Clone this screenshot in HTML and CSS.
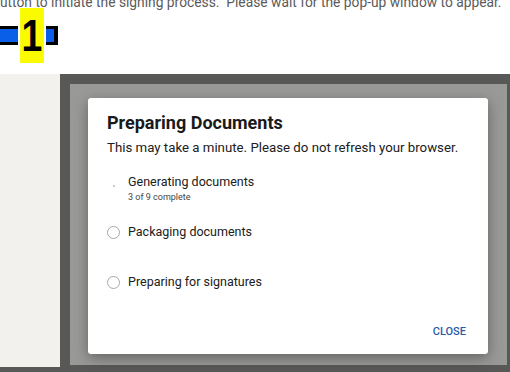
FILE: index.html
```html
<!DOCTYPE html>
<html>
<head>
	<meta charset="UTF-8">
	<link rel="stylesheet" href="styles.css">
</head>
<body>
	<p class="intro">utton to initiate the signing process.&nbsp; Please wait for the pop-up window to appear.</p>

	<div class="marker">
		<div class="marker-bar marker-left"></div>
		<div class="marker-num">1</div>
		<div class="marker-bar marker-right"></div>
	</div>

	<div class="stage">
		<div class="side"></div>
		<div class="frame">
			<div class="backdrop">
				<div class="dialog">
					<h2 class="dialog-title">Preparing Documents</h2>
					<p class="dialog-text">This may take a minute. Please do not refresh your browser.</p>

					<ul class="steps">
						<li class="step">
							<span class="step-icon"><span class="spinner"></span></span>
							<div>
								<div class="step-label">Generating documents</div>
								<div class="step-sub">3 of 9 complete</div>
							</div>
						</li>
						<li class="step">
							<span class="step-icon"><span class="radio"></span></span>
							<div class="step-label">Packaging documents</div>
						</li>
						<li class="step">
							<span class="step-icon"><span class="radio"></span></span>
							<div class="step-label">Preparing for signatures</div>
						</li>
					</ul>

					<div class="dialog-actions">
						<button class="btn-close">CLOSE</button>
					</div>
				</div>
			</div>
		</div>
	</div>
</body>
</html>
```

FILE: styles.css
```css
body {
	margin: 0;
	background: white;
	font-family: Roboto, "Liberation Sans", sans-serif;
	overflow: hidden;
}

.intro {
	margin: -6px 0 0;
	font-size: 13.8px;
	line-height: 16px;
	color: #5a5a5a;
	white-space: nowrap;
}

.marker {
	display: flex;
	align-items: center;
	height: 55px;
	margin-top: -2px;
}

.marker-bar {
	height: 13px;
	background: #0a5fe8;
	border-top: 3px solid black;
	border-bottom: 3px solid black;
}
.marker-left {
	width: 18px;
}
.marker-right {
	width: 8px;
	border-right: 4px solid black;
}

.marker-num {
	width: 28px;
	height: 55px;
	background: #fbfb00;
	color: black;
	font-family: "Liberation Sans", Arial, sans-serif;
	font-weight: bold;
	font-size: 44px;
	line-height: 55px;
	text-align: center;
	transform: scaleX(0.85);
}

.stage {
	display: flex;
	margin-top: 11px;
	height: 298px;
	background: #585856;
}

.side {
	width: 60px;
	height: 293px;
	background: #f3f1ee;
}

.frame {
	flex: 1;
	padding: 10px 3px 7px 10px;
}

.backdrop {
	height: 281px;
	background: #999997;
	padding-top: 14px;
	box-sizing: border-box;
}

.dialog {
	display: flex;
	flex-direction: column;
	width: 400px;
	height: 256px;
	margin-left: 18px;
	box-sizing: border-box;
	padding: 15px 22px 14px 19px;
	background: white;
	border-radius: 3px;
	box-shadow: 0 4px 14px rgba(0, 0, 0, 0.35);
	color: #202020;
}

.dialog-title {
	margin: 0;
	font-size: 18px;
	line-height: 20px;
	font-weight: 700;
	color: #1a1a1a;
}

.dialog-text {
	margin: 7px 0 0;
	font-size: 13.25px;
	line-height: 16px;
}

.steps {
	list-style: none;
	margin: 18px 0 0;
	padding: 0;
}

.step {
	display: flex;
	gap: 8px;
	height: 50px;
}

.step-icon {
	display: flex;
	justify-content: center;
	align-items: center;
	width: 13px;
	height: 13px;
	margin-top: 2px;
}

.spinner {
	width: 2px;
	height: 2px;
	margin-top: 6px;
	border-radius: 50%;
	background: #b8b8b8;
}

.radio {
	width: 11px;
	height: 11px;
	border: 1px solid #a8a8a8;
	border-radius: 50%;
}

.step-label {
	font-size: 12.5px;
	line-height: 16px;
}

.step-sub {
	font-size: 9px;
	line-height: 12px;
	margin-top: 1px;
	color: #444;
}

.dialog-actions {
	margin-top: auto;
	display: flex;
	justify-content: flex-end;
}

.btn-close {
	border: none;
	background: none;
	padding: 0;
	font-family: inherit;
	font-size: 11px;
	line-height: 16px;
	font-weight: 500;
	color: #2c5ba8;
}
```
